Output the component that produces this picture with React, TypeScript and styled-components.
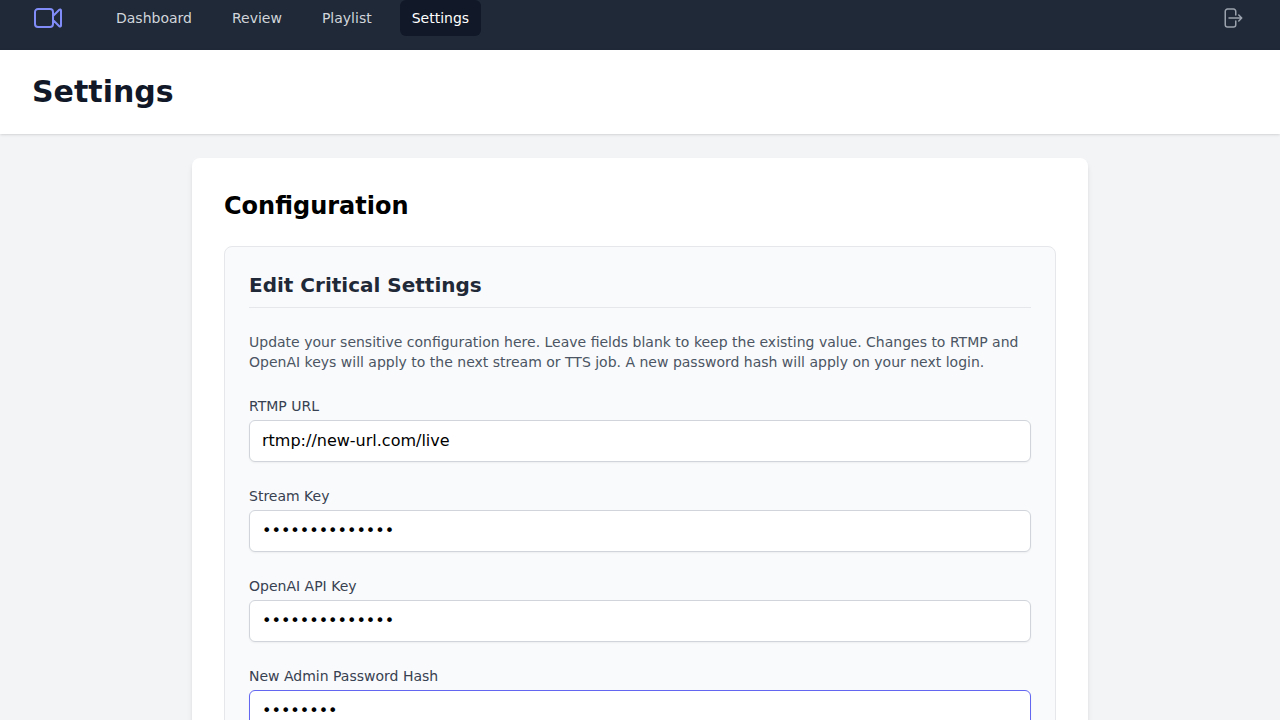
import React from "react";
import styled, { createGlobalStyle } from "styled-components";

const GlobalStyle = createGlobalStyle`
  *, *::before, *::after { box-sizing: border-box; }
  body {
    margin: 0;
    background: #f3f4f6;
    color: #000;
    font-family: "DejaVu Sans", sans-serif;
    font-size: 16px;
    line-height: 24px;
  }
  h1, h2, h3, p { margin: 0; }
`;

const NavBar = styled.nav`
  display: flex;
  align-items: center;
  padding: 0 32px 14px;
  background: #1f2937;
`;

const Logo = styled.svg`
  flex: none;
  width: 32px;
  height: 32px;
  color: #818cf8;
`;

const NavLinks = styled.div`
  display: flex;
  flex: 1;
  gap: 16px;
  margin-left: 40px;
`;

const NavLink = styled.a<{ $active?: boolean }>`
  padding: 8px 12px;
  border-radius: 6px;
  background: ${(p) => (p.$active ? "#111827" : "transparent")};
  color: ${(p) => (p.$active ? "#fff" : "#d1d5db")};
  font-size: 14px;
  font-weight: 500;
  line-height: 20px;
  text-decoration: none;
`;

const LogoutButton = styled.button`
  display: flex;
  padding: 4px;
  border: 0;
  border-radius: 16px;
  background: transparent;
  color: #9ca3af;
  cursor: pointer;
`;

const ButtonIcon = styled.svg`
  width: 24px;
  height: 24px;
`;

const PageHeader = styled.header`
  padding: 24px 32px;
  background: #fff;
  box-shadow: 0 1px 3px rgba(0, 0, 0, 0.1), 0 1px 2px -1px rgba(0, 0, 0, 0.1);
`;

const PageTitle = styled.h1`
  color: #111827;
  font-size: 30px;
  font-weight: 700;
  line-height: 36px;
`;

const Main = styled.main`
  max-width: 944px;
  margin: 0 auto;
  padding: 24px;
`;

const Card = styled.section`
  padding: 32px;
  border-radius: 8px;
  background: #fff;
  box-shadow: 0 4px 6px -1px rgba(0, 0, 0, 0.1), 0 2px 4px -2px rgba(0, 0, 0, 0.1);
`;

const CardTitle = styled.h2`
  margin-bottom: 24px;
  font-size: 24px;
  font-weight: 700;
  line-height: 32px;
`;

const SettingsForm = styled.form`
  display: flex;
  flex-direction: column;
  gap: 24px;
  padding: 24px;
  border: 1px solid #e5e7eb;
  border-radius: 8px;
  background: #f9fafb;
`;

const FormTitle = styled.h3`
  padding-bottom: 8px;
  border-bottom: 1px solid #e5e7eb;
  color: #1f2937;
  font-size: 20px;
  font-weight: 600;
  line-height: 28px;
`;

const FormHint = styled.p`
  color: #4b5563;
  font-size: 14px;
  line-height: 20px;
`;

const Field = styled.div`
  display: flex;
  flex-direction: column;
  gap: 4px;
`;

const Label = styled.label`
  color: #374151;
  font-size: 14px;
  font-weight: 500;
  line-height: 20px;
`;

const TextInput = styled.input<{ $active?: boolean }>`
  width: 100%;
  padding: 8px 12px;
  border: 1px solid ${(p) => (p.$active ? "#6366f1" : "#d1d5db")};
  border-radius: 6px;
  background: #fff;
  box-shadow: 0 1px 2px rgba(0, 0, 0, 0.05);
  color: #000;
  font-family: inherit;
  font-size: 16px;
  line-height: 24px;

  &:focus {
    outline: none;
    border-color: #6366f1;
  }
`;

const links = ["Dashboard", "Review", "Playlist", "Settings"];

const fields = [
  { id: "rtmp-url", label: "RTMP URL", type: "text", value: "rtmp://new-url.com/live" },
  { id: "stream-key", label: "Stream Key", type: "password", value: "new-stream-key" },
  { id: "openai-key", label: "OpenAI API Key", type: "password", value: "new-openai-key" },
  { id: "password-hash", label: "New Admin Password Hash", type: "password", value: "new-hash", active: true },
];

export default function App() {
  return (
    <>
      <GlobalStyle />
      <NavBar>
        <Logo viewBox="0 0 24 24" fill="none" stroke="currentColor" strokeWidth="1.5" strokeLinecap="round" strokeLinejoin="round" aria-hidden="true">
          <path d="m15.75 10.5 4.72-4.72a.75.75 0 0 1 1.28.53v11.38a.75.75 0 0 1-1.28.53l-4.72-4.72M4.5 18.75h9a2.25 2.25 0 0 0 2.25-2.25v-9a2.25 2.25 0 0 0-2.25-2.25h-9A2.25 2.25 0 0 0 2.25 7.5v9a2.25 2.25 0 0 0 2.25 2.25Z" />
        </Logo>
        <NavLinks>
          {links.map((name) => (
            <NavLink key={name} href={`#${name.toLowerCase()}`} $active={name === "Settings"}>
              {name}
            </NavLink>
          ))}
        </NavLinks>
        <LogoutButton type="button" aria-label="Log out">
          <ButtonIcon viewBox="0 0 24 24" fill="none" stroke="currentColor" strokeWidth="1.5" strokeLinecap="round" strokeLinejoin="round" aria-hidden="true">
            <path d="M15.75 9V5.25A2.25 2.25 0 0 0 13.5 3h-6a2.25 2.25 0 0 0-2.25 2.25v13.5A2.25 2.25 0 0 0 7.5 21h6a2.25 2.25 0 0 0 2.25-2.25V15m3 0 3-3m0 0-3-3m3 3H9" />
          </ButtonIcon>
        </LogoutButton>
      </NavBar>
      <PageHeader>
        <PageTitle>Settings</PageTitle>
      </PageHeader>
      <Main>
        <Card>
          <CardTitle>Configuration</CardTitle>
          <SettingsForm>
            <FormTitle>Edit Critical Settings</FormTitle>
            <FormHint>
              Update your sensitive configuration here. Leave fields blank to keep the existing value. Changes to RTMP
              and OpenAI keys will apply to the next stream or TTS job. A new password hash will apply on your next
              login.
            </FormHint>
            {fields.map((field) => (
              <Field key={field.id}>
                <Label htmlFor={field.id}>{field.label}</Label>
                <TextInput id={field.id} type={field.type} defaultValue={field.value} $active={field.active} />
              </Field>
            ))}
          </SettingsForm>
        </Card>
      </Main>
    </>
  );
}
